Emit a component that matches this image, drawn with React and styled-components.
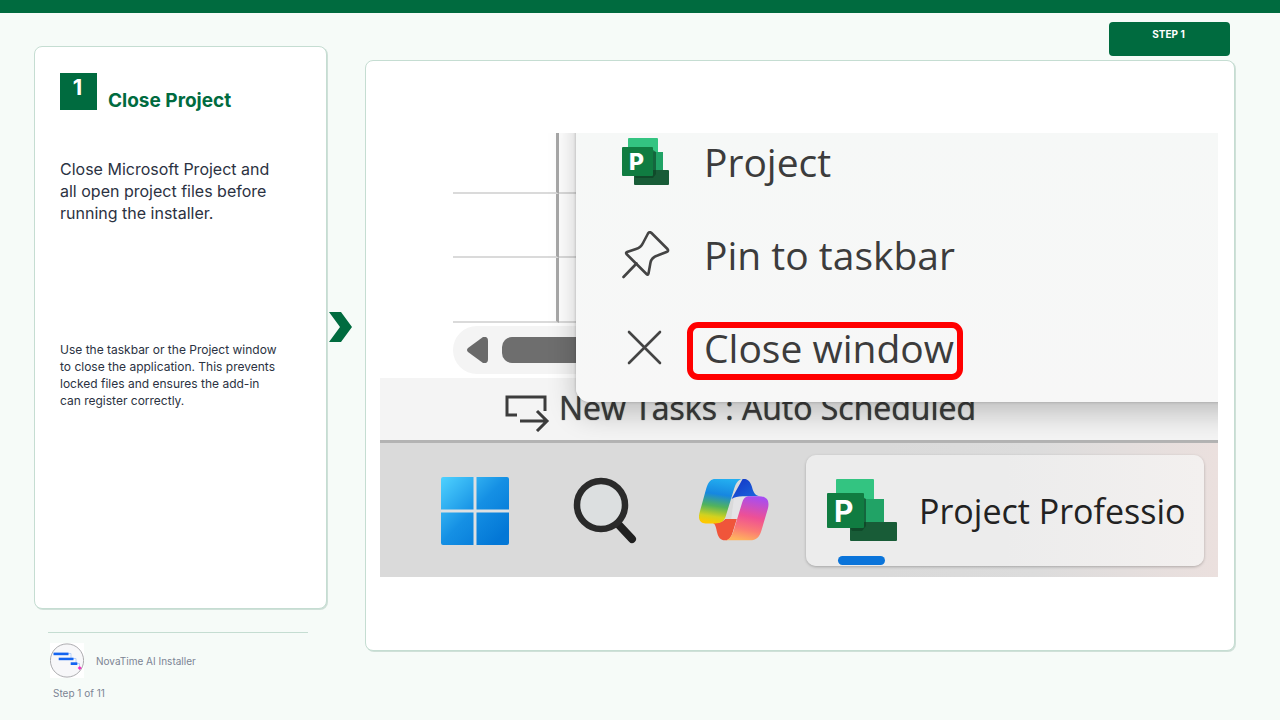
import React from "react";
import styled, { createGlobalStyle } from "styled-components";

const GlobalStyle = createGlobalStyle`
  *, *::before, *::after {
    box-sizing: border-box;
  }
  body {
    margin: 0;
    background: #f6fbf8;
    font-family: Inter, "Liberation Sans", sans-serif;
    color: #2b3242;
  }
  h1, p, figure {
    margin: 0;
  }
  button {
    font: inherit;
    color: inherit;
    border: 0;
    padding: 0;
    background: none;
    text-align: left;
    cursor: pointer;
  }
  svg {
    display: block;
    flex-shrink: 0;
  }
`

const Page = styled.div`
  min-height: 100vh;
  display: flex;
  flex-direction: column;
`

const TopBar = styled.div`
  height: 13px;
  background: #006b3f;
`

const Columns = styled.main`
  flex: 1;
  display: grid;
  grid-template-columns: minmax(240px, 293fr) 38px minmax(0, 870fr);
  padding: 0 45px 0 34px;
`

const Column = styled.div`
  display: flex;
  flex-direction: column;
  padding: ${props => props.$padding};
`

const Card = styled.section`
  flex: 1;
  display: flex;
  flex-direction: column;
  padding: ${props => props.$padding};
  background: #fff;
  border: 1px solid #c5ddd2;
  border-radius: 8px;
  box-shadow: 1px 1px 0 #cfe0d8;
`

const StepHeader = styled.header`
  display: flex;
  align-items: flex-start;
  gap: 11px;
`

const StepNumber = styled.span`
  width: 37px;
  height: 37px;
  padding-right: 2px;
  background: #006b3f;
  color: #fff;
  font-size: 22px;
  font-weight: 700;
  line-height: 28px;
  text-align: center;
`

const Title = styled.h1`
  padding-top: 16px;
  color: #006b3f;
  font-size: 19px;
  font-weight: 700;
  line-height: 24px;
`

const Lead = styled.p`
  margin-top: 45px;
  font-size: 16px;
  line-height: 22px;
`

const Note = styled.p`
  margin-top: 117px;
  font-size: 12px;
  line-height: 17px;
`

const Footer = styled.footer`
  height: 111px;
  margin: 0 19px 0 14px;
  padding-top: 23px;
  color: #7c8494;
  font-size: 10px;
  line-height: 14px;
`

const Brand = styled.div`
  display: flex;
  align-items: center;
  gap: 12px;
  border-top: 1px solid #c5ddd2;
  padding: 10px 0 0 2px;
`

const StepCount = styled.p`
  padding: 8px 0 0 5px;
`

const Arrow = styled.div`
  padding: 299px 0 0 2px;
`

const Badge = styled.div`
  align-self: flex-end;
  width: 121px;
  height: 34px;
  margin: 0 5px 4px 0;
  padding-right: 2px;
  border-radius: 4px;
  background: #006b3f;
  color: #fff;
  font-size: 10px;
  font-weight: 700;
  line-height: 24px;
  text-align: center;
`

/* The captured desktop */

const Capture = styled.figure`
  position: relative;
  margin: auto 0;
  overflow: hidden;
  background: #fff;
  color: #3c3c3c;
  font-family: "Open Sans", "Noto Sans", sans-serif;
  text-shadow: 0 0 1px #3c3c3c;
  white-space: nowrap;
`

const Sheet = styled.div`
  width: 200px;
  height: 193px;
  padding-left: 73px;
  display: grid;
  grid-template-columns: 106px 1fr;
  grid-template-rows: 61px 64px 65px;
`

const SheetCell = styled.div`
  border-bottom: 2px solid #dadada;
  border-right: ${props => (props.$ruled ? "3px solid #a8a8a8" : "0")};
`

const ScrollBar = styled.div`
  display: flex;
  align-items: center;
  gap: 14px;
  width: 200px;
  height: 48px;
  margin: 0 0 4px 73px;
  padding-left: 14px;
  border-radius: 24px;
  background: #f4f4f4;
`

const ScrollThumb = styled.div`
  flex: 1;
  height: 26px;
  border-radius: 10px;
  background: #6e6e6e;
`

const StatusBar = styled.div`
  display: flex;
  align-items: flex-start;
  gap: 8px;
  height: 65px;
  padding-left: 125px;
  background: #f4f4f4;
  border-bottom: 3px solid #b3b3b3;
  font-size: 32px;
  font-weight: 500;
  line-height: 60px;

  svg {
    margin-top: 16px;
  }
`

const Menu = styled.div`
  position: absolute;
  top: 0;
  left: 196px;
  right: 0;
  height: 269px;
  overflow: hidden;
  border-radius: 0 0 0 14px;
  background: linear-gradient(#f6f8f7, #f7f7f7);
`

const MenuShadow = styled.div`
  position: absolute;
  top: -40px;
  left: 196px;
  right: -40px;
  height: 309px;
  border-radius: 14px;
  box-shadow: 0 0 3px rgba(0, 0, 0, 0.25), 0 12px 28px rgba(0, 0, 0, 0.22);
`

const MenuList = styled.div`
  display: flex;
  flex-direction: column;
  margin-top: -17px;
`

const MenuItem = styled.button`
  display: flex;
  align-items: center;
  gap: 34px;
  height: 93px;
  padding-left: 46px;
  font-size: 39px;
  line-height: 48px;
`

const MenuLabel = styled.span`
  position: relative;
`

const Highlight = styled.span`
  position: absolute;
  top: -2px;
  left: -17px;
  width: 276px;
  height: 58px;
  border: 6px solid #f00;
  border-radius: 11px;
`

const Taskbar = styled.div`
  display: flex;
  align-items: center;
  height: 134px;
  padding: 2px 14px 0 61px;
  background: linear-gradient(90deg, #dadada 60%, #dcdcdc 78%, #ebe0de);
`

const TaskbarIcons = styled.div`
  display: flex;
  align-items: center;
  gap: 62px;
  margin-right: 36px;
`

const TaskButton = styled.button`
  position: relative;
  flex: 1;
  display: flex;
  align-items: center;
  gap: 22px;
  height: 111px;
  padding-left: 21px;
  border-radius: 10px;
  background: linear-gradient(90deg, #ececec 50%, #f3f0ef);
  box-shadow: 0 1px 3px rgba(0, 0, 0, 0.25);
  color: #222;
  font-size: 34px;

  &::after {
    content: "";
    position: absolute;
    left: 32px;
    bottom: 1px;
    width: 47px;
    height: 9px;
    border-radius: 5px;
    background: #0a74da;
  }
`

const NovaLogo = () => (
  <svg width="34" height="35" viewBox="0 0 34 35">
    <rect width="34" height="35" fill="#fff" />
    <circle cx="17" cy="17.5" r="16.6" fill="#f7f7f9" stroke="#a3a3a6" strokeWidth="0.9" />
    <path d="M18 10.5h3v5M23 15.5h3v4M27 20.5h2.500v3" fill="none" stroke="#a9c8fa" strokeWidth="0.8" />
    <rect x="3.500" y="9.600" width="15" height="2.600" fill="#1464f0" />
    <rect x="8.700" y="14.700" width="14.800" height="2.500" fill="#1464f0" />
    <rect x="20.700" y="19.300" width="6.600" height="2.700" fill="#1464f0" />
    <path d="M29.700 23l2 2-2 2-2-2z" fill="#f22fc0" />
  </svg>
)

const Chevron = () => (
  <svg width="23" height="30" viewBox="0 0 23 30">
    <path d="M0 0h12l11 15-11 15H0l11-15z" fill="#006b3f" />
  </svg>
)

const ProjectSmall = () => (
  <svg width="48" height="48" viewBox="0 0 48 48">
    <rect x="6" y="0" width="30" height="20" rx="1" fill="#33c481" />
    <rect x="29" y="14" width="12" height="20" fill="#21a366" />
    <rect x="12" y="32" width="35" height="15" rx="1" fill="#185c37" />
    <path d="M31 12l3 2v22l-3 4H14l-2-3z" fill="#0b3d22" opacity="0.6" />
    <rect x="0" y="9" width="31" height="29" rx="1" fill="#107c41" />
    <text x="7" y="32" fill="#fff" fontFamily="Inter" fontSize="23" fontWeight="800">P</text>
  </svg>
)

const ProjectLarge = () => (
  <svg width="70" height="63" viewBox="0 0 70 63">
    <rect x="9" y="0" width="38" height="22" rx="1" fill="#33c481" />
    <rect x="36" y="20" width="21" height="24" fill="#21a366" />
    <rect x="23" y="43" width="47" height="19" rx="1" fill="#185c37" />
    <path d="M36 18l3 2v27l-4 5H25l-2-4z" fill="#0b3d22" opacity="0.6" />
    <rect x="0" y="14" width="37" height="35" rx="1" fill="#107c41" />
    <text x="7" y="43" fill="#fff" fontFamily="Inter" fontSize="30" fontWeight="700">P</text>
  </svg>
)

const PinIcon = () => (
  <svg width="48" height="48" viewBox="0 0 48 48" fill="none" stroke="#444" strokeWidth="2.600" strokeLinejoin="round" strokeLinecap="round">
    <path d="M26 2.500q1.500-2.500 3.500-.5L45.500 18q1.500 2-1 3l-9 3.500q-6 2-7 7l-2 11q-.5 2-2 .5L4.500 23q-1-1.500.5-2l9-3q5-1.500 7-6z" />
    <path d="M14.500 32.500L1.500 46" />
  </svg>
)

const CloseIcon = () => (
  <svg width="48" height="48" viewBox="0 0 48 48" fill="none" stroke="#444" strokeWidth="2.600" strokeLinecap="round">
    <path d="M7 8l31 31M38 8L7 39" />
  </svg>
)

const TaskModeIcon = () => (
  <svg width="46" height="38" viewBox="0 0 46 38" fill="none" stroke="#3c3c3c" strokeWidth="3">
    <path d="M12 21H2V3h38v14" />
    <path d="M15 27h27M32 17l10 10-10 10" />
  </svg>
)

const WindowsIcon = () => (
  <svg width="68" height="68" viewBox="0 0 68 68">
    <defs>
      <linearGradient id="win" gradientUnits="userSpaceOnUse" x1="0" y1="0" x2="60" y2="60">
        <stop offset="0" stopColor="#4fd2ff" />
        <stop offset="0.550" stopColor="#1590e4" />
        <stop offset="1" stopColor="#0377d6" />
      </linearGradient>
    </defs>
    <rect width="68" height="68" rx="2" fill="#dde0e2" />
    <path d="M2 0h30.500v32.500H0V2q0-2 2-2zM35.500 0H66q2 0 2 2v30.500H35.500zM0 35.500h32.500V68H2q-2 0-2-2zM35.500 35.500H68V66q0 2-2 2H35.500z" fill="url(#win)" />
  </svg>
)

const SearchIcon = () => (
  <svg width="66" height="68" viewBox="0 0 66 68">
    <path d="M47 47l14 15" stroke="#202020" strokeWidth="8" strokeLinecap="round" />
    <circle cx="30" cy="28" r="24" fill="#dcdfe0" stroke="#2a2a2a" strokeWidth="6.500" />
  </svg>
)

const CopilotIcon = () => (
  <svg width="71" height="63" viewBox="57 293 212 190">
    <defs>
      <linearGradient id="copLeft" x1="0.500" y1="0" x2="0.350" y2="1">
        <stop offset="0" stopColor="#23aef0" />
        <stop offset="0.350" stopColor="#1687e0" />
        <stop offset="0.620" stopColor="#52b35c" />
        <stop offset="0.850" stopColor="#d2d21f" />
        <stop offset="1" stopColor="#ffc800" />
      </linearGradient>
      <linearGradient id="copRight" x1="0.600" y1="0" x2="0.400" y2="1">
        <stop offset="0" stopColor="#a84df0" />
        <stop offset="0.450" stopColor="#ee5095" />
        <stop offset="0.750" stopColor="#fb7a74" />
        <stop offset="1" stopColor="#ffb35e" />
      </linearGradient>
      <linearGradient id="copFold" x1="0" y1="0" x2="1" y2="1">
        <stop offset="0" stopColor="#1432c4" />
        <stop offset="1" stopColor="#1b6be0" />
      </linearGradient>
    </defs>
    <path d="M162 345l90 0-66 90-40 35z" fill="#e4e4e6" />
    <path d="M188 292c17 0 24 12 28 26 4 16 10 25 22 27h-50c-16 0-24 3-34 8z" fill="url(#copFold)" />
    <path d="M135 478c-15 0-21-10-24-22-4-16-5-26-13-30 20 0 30-4 37-12h35l-10 32c-6 22-12 32-25 32z" fill="#f0553a" />
    <path d="M110 292h80c-16 2-23 14-28 30l-25 82c-5 17-16 23-33 23H76c-18 0-24-14-18-34l20-72c6-20 14-29 32-29z" fill="url(#copLeft)" />
    <path d="M208 345h30c24 0 31 14 26 36l-20 68c-6 20-16 29-34 29h-75c14-3 20-13 26-32l24-78c5-17 10-23 23-23z" fill="url(#copRight)" />
  </svg>
)

const ScrollArrow = () => (
  <svg width="21" height="26" viewBox="0 0 21 26">
    <path d="M1 11L16 0q5-1 5 4v18q0 5-5 4L1 15q-2-2 0-4z" fill="#6a6a6a" />
  </svg>
)

const menuItems = [
  { label: "Project", icon: <ProjectSmall /> },
  { label: "Pin to taskbar", icon: <PinIcon /> },
  { label: "Close window", icon: <CloseIcon />, highlighted: true },
]

const App = () => (
  <Page>
    <GlobalStyle />
    <TopBar />
    <Columns>
      <Column $padding="33px 0 0">
        <Card $padding="26px 45px 26px 25px">
          <StepHeader>
            <StepNumber>1</StepNumber>
            <Title>Close Project</Title>
          </StepHeader>
          <Lead>Close Microsoft Project and all open project files before running the installer.</Lead>
          <Note>
            Use the taskbar or the Project window to close the application. This prevents locked files and ensures the add-in can register correctly.
          </Note>
        </Card>
        <Footer>
          <Brand>
            <NovaLogo />
            <span>NovaTime AI Installer</span>
          </Brand>
          <StepCount>Step 1 of 11</StepCount>
        </Footer>
      </Column>
      <Arrow>
        <Chevron />
      </Arrow>
      <Column $padding="9px 0 69px">
        <Badge>STEP 1</Badge>
        <Card $padding="0 16px 2px 14px">
          <Capture>
            <Sheet>
              <SheetCell $ruled />
              <SheetCell />
              <SheetCell $ruled />
              <SheetCell />
              <SheetCell $ruled />
              <SheetCell />
            </Sheet>
            <ScrollBar>
              <ScrollArrow />
              <ScrollThumb />
            </ScrollBar>
            <StatusBar>
              <TaskModeIcon />
              <span>New Tasks : Auto Scheduled</span>
            </StatusBar>
            <Taskbar>
              <TaskbarIcons>
                <WindowsIcon />
                <SearchIcon />
                <CopilotIcon />
              </TaskbarIcons>
              <TaskButton>
                <ProjectLarge />
                <span>Project Professio</span>
              </TaskButton>
            </Taskbar>
            <MenuShadow />
            <Menu>
              <MenuList>
                {menuItems.map(item => (
                  <MenuItem key={item.label}>
                    {item.icon}
                    <MenuLabel>
                      {item.label}
                      {item.highlighted && <Highlight />}
                    </MenuLabel>
                  </MenuItem>
                ))}
              </MenuList>
            </Menu>
          </Capture>
        </Card>
      </Column>
    </Columns>
  </Page>
)

export default App;
